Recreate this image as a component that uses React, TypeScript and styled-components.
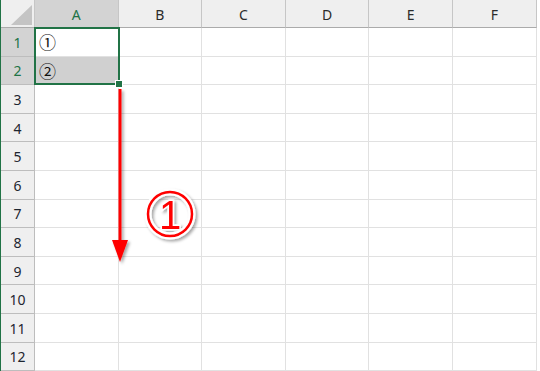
import React from 'react'
import styled, { createGlobalStyle } from 'styled-components'

const GlobalStyle = createGlobalStyle`
    html, body {
        margin: 0;
        padding: 0;
        background: #ffffff;
    }
    body {
        font-family: "Noto Sans", "Liberation Sans", sans-serif;
    }
`

const COLS = ['A', 'B', 'C', 'D', 'E', 'F']
const ROWS = Array.from({ length: 12 }, (_, i) => i + 1)
const SELECTED_ROWS = [1, 2]

const Sheet = styled.div`
    position: relative;
    display: grid;
    grid-template-columns: 34px repeat(6, 83.6px);
    grid-template-rows: 28px repeat(12, 28.6px);
    width: 540px;
    height: 371px;
    overflow: hidden;
    border-left: 1px solid #217346;
    box-sizing: border-box;
`

const Corner = styled.div`
    position: relative;
    background: #efefef;
    border-right: 1px solid #c6c6c6;
    border-bottom: 1px solid #ababab;
    box-sizing: border-box;

    &::after {
        content: '';
        position: absolute;
        right: 2px;
        bottom: 2px;
        width: 21px;
        height: 20px;
        background: #c4c4c4;
        clip-path: polygon(100% 0, 100% 100%, 0 100%);
    }
`

const ColHeader = styled.div<{ $selected?: boolean }>`
    display: flex;
    align-items: center;
    justify-content: center;
    background: ${p => (p.$selected ? '#d3d3d3' : '#efefef')};
    color: ${p => (p.$selected ? '#217346' : '#2b2b2b')};
    border-right: 1px solid #c6c6c6;
    border-bottom: 1px solid ${p => (p.$selected ? '#217346' : '#ababab')};
    box-sizing: border-box;
    font-size: 14px;
    padding-top: 1px;
`

const RowHeader = styled.div<{ $selected?: boolean }>`
    display: flex;
    align-items: center;
    justify-content: center;
    background: ${p => (p.$selected ? '#d3d3d3' : '#efefef')};
    color: ${p => (p.$selected ? '#217346' : '#1e2630')};
    border-right: 1px solid #bdbdbd;
    border-bottom: 1px solid #bdbdbd;
    box-sizing: border-box;
    font-size: 14px;
    padding-top: 1px;
`

const Cell = styled.div<{ $shaded?: boolean }>`
    display: flex;
    align-items: center;
    padding-left: 4px;
    background: ${p => (p.$shaded ? '#d0d0d0' : '#ffffff')};
    border-right: 1px solid #e1e1e1;
    border-bottom: 1px solid #e1e1e1;
    box-sizing: border-box;
    font-family: "Noto Sans CJK JP", "DejaVu Sans", sans-serif;
    font-size: 17px;
    color: #111111;
`

const Selection = styled.div`
    position: absolute;
    left: 33px;
    top: 27px;
    width: 86px;
    height: 58px;
    border: 2px solid #217346;
    box-sizing: border-box;
    pointer-events: none;
`

const FillHandle = styled.div`
    position: absolute;
    right: -5px;
    bottom: -5px;
    width: 6px;
    height: 6px;
    background: #217346;
    border: 1px solid #ffffff;
`

const Overlay = styled.svg`
    position: absolute;
    left: -1px;
    top: 0;
    pointer-events: none;
`

const cellText: Record<string, string> = {
    A1: '①',
    A2: '②',
}

const App: React.FC = () => {
    return (
        <>
            <GlobalStyle />
            <Sheet>
                <Corner />
                {COLS.map(c => (
                    <ColHeader key={c} $selected={c === 'A'}>{c}</ColHeader>
                ))}
                {ROWS.map(r => (
                    <React.Fragment key={r}>
                        <RowHeader $selected={SELECTED_ROWS.includes(r)}>{r}</RowHeader>
                        {COLS.map(c => (
                            <Cell key={c + r} $shaded={c === 'A' && r === 2}>
                                {cellText[c + r]}
                            </Cell>
                        ))}
                    </React.Fragment>
                ))}

                <Selection>
                    <FillHandle />
                </Selection>

                <Overlay width={540} height={371} viewBox="0 0 540 371">
                    <defs>
                        <filter id="shadow" x="-30%" y="-30%" width="160%" height="160%">
                            <feDropShadow dx="2" dy="2" stdDeviation="1.5" floodColor="#000" floodOpacity="0.35" />
                        </filter>
                    </defs>
                    <g filter="url(#shadow)">
                        <line x1={120} y1={89} x2={120} y2={243} stroke="#ff0000" strokeWidth={3} />
                        <polygon points="112,240 128,240 120,262" fill="#ff0000" />
                    </g>
                    <g filter="url(#shadow)">
                        <circle cx={170} cy={214} r={22} fill="none" stroke="#ffffff" strokeWidth={7} />
                        <circle cx={170} cy={214} r={22} fill="none" stroke="#ff0000" strokeWidth={2.5} />
                        <text
                            x={170}
                            y={229}
                            textAnchor="middle"
                            fontFamily='"Liberation Sans", sans-serif'
                            fontSize={40}
                            fill="#ff0000"
                            stroke="#ffffff"
                            strokeWidth={3}
                            paintOrder="stroke"
                        >1</text>
                    </g>
                </Overlay>
            </Sheet>
        </>
    )
}

export default App
